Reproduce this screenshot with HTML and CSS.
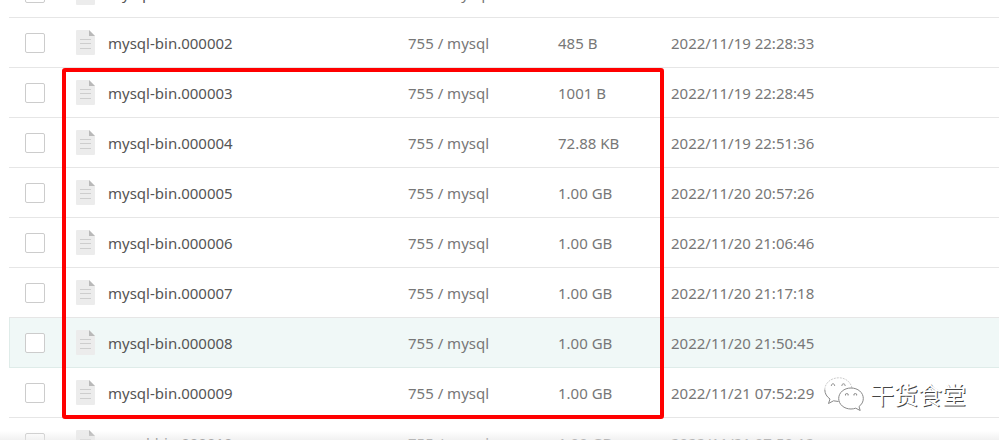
FILE: index.html
```
<!DOCTYPE html>
<html lang="zh-CN">
	<head>
		<meta charset="UTF-8">
		<meta name="viewport" content="width=device-width, initial-scale=1">
		<title>mysql-bin</title>
		<link rel="stylesheet" href="styles.css">
	</head>

	<body>
		<!-- file icon, reused by every row -->
		<svg class="sprite" aria-hidden="true">
			<symbol id="iconFile" viewBox="0 0 19 25">
				<path d="M1 0h12l6 6v18a1 1 0 0 1-1 1H1a1 1 0 0 1-1-1V1a1 1 0 0 1 1-1z" fill="#ececec"/>
				<path d="M13 0l6 6h-6z" fill="#b9b9b9"/>
				<path d="M4 9.500h11M4 13.500h11M4 18.500h11" stroke="#cdcdcd"/>
			</symbol>
		</svg>

		<div class="fileList">
			<table class="fileTable">
				<colgroup>
					<col class="colCheck">
					<col class="colIcon">
					<col class="colName">
					<col class="colOwner">
					<col class="colSize">
					<col>
				</colgroup>
				<tbody id="rows"></tbody>
			</table>
			<div class="mark"></div>
			<div class="watermark">
				<svg class="wechat" width="40" height="34" viewBox="0 0 40 34" aria-hidden="true">
					<path d="M28 11C26.500 4.500 21 .8 15 .8 7 .8.8 6.100.8 12.600" class="faint"/>
					<path d="M.8 12.600c0 4 2 7.200 5.200 9.400l-1.500 4.500 5-2.700 5 .7" class="dark"/>
					<path d="M27 11c-7 0-12.300 4.600-12.300 10.500S20 32 27 32c1.800 0 3.200-.3 4.700-.8l4.500 2.300-1.200-4c2.800-2 4.300-4.800 4.300-8C39.300 15.600 34 11 27 11z" class="dark fill"/>
					<path d="M7.500 9a1.600 1.600 0 1 1 3 0M18 9a1.600 1.600 0 1 1 3 0M21.500 18.500a1.400 1.400 0 1 1 2.600 0M30 18.500a1.400 1.400 0 1 1 2.600 0" class="dark"/>
				</svg>
				<span>干货食堂</span>
			</div>
			<div class="fade"></div>
		</div>

		<script src="script.js"></script>
	</body>
</html>
```
FILE: styles.css
```
body {
	margin: 0;
	background-color: #fff;
	color: #777;
	font-family: "Noto Sans", "Noto Sans CJK SC", sans-serif;
	font-size: 15px;
	line-height: 20px;
}

.sprite {
	display: none;
}

/*---------------------------TABLE---------------------------*/
/* the list is scrolled part way into its first row */
.fileList {
	position: relative;
	height: 100vh;
	overflow: hidden;
}

.fileTable {
	width: calc(100% - 9px);
	margin: -32px 0 0 9px;
	border-collapse: collapse;
	table-layout: fixed;
}

.colCheck {
	width: 67px;
}

.colIcon {
	width: 32px;
}

.colName {
	width: 300px;
}

.colOwner {
	width: 150px;
}

.colSize {
	width: 113px;
}

.fileTable td {
	height: 49px;
	padding: 0;
	border-bottom: 1px solid #e6e6e6;
	white-space: nowrap;
}

.fileTable label {
	color: #555;
}

.fileTable tr.active {
	background-color: #f0f8f7;
}

.fileTable tr.active td {
	border-top: 1px solid #dfece9;
	border-bottom-color: #dfece9;
}

.fileTable tr.active td:first-child {
	box-shadow: inset 1px 0 #dfece9;
}

.check {
	display: block;
	box-sizing: border-box;
	width: 20px;
	height: 20px;
	margin: 0 0 0 16px;
	appearance: none;
	background-color: #fff;
	border: 1px solid #ccc;
	border-radius: 2px;
}

.check:checked {
	background-color: #20a53a;
}

.fileIcon {
	display: block;
	width: 19px;
	height: 25px;
}

/*---------------------------OVERLAYS---------------------------*/
.mark {
	position: absolute;
	top: 68px;
	left: 62px;
	box-sizing: border-box;
	width: 602px;
	height: 351px;
	border: 4px solid #f00;
	border-radius: 3px;
}

.watermark {
	position: absolute;
	top: 376px;
	right: 33px;
	display: flex;
	align-items: center;
	gap: 6px;
	color: #fff;
	font-family: "Noto Sans CJK SC", sans-serif;
	font-size: 24px;
	line-height: 36px;
	text-shadow: 1px 1px 0 #444;
}

.wechat path {
	fill: none;
}

.wechat .faint {
	stroke: #ccc;
	stroke-dasharray: 2 1;
}

.wechat .dark {
	stroke: #888;
}

.wechat .fill {
	fill: #fff;
}

.fade {
	position: absolute;
	right: 0;
	bottom: 0;
	left: 0;
	height: 9px;
	background: linear-gradient(rgba(238, 238, 238, 0), rgba(232, 232, 232, 0.6));
}
```
FILE: script.js
```
var files = [
	{ name: 'mysql-bin.000001', size: '1.00 KB', time: '2022/11/19 22:28:31' },
	{ name: 'mysql-bin.000002', size: '485 B', time: '2022/11/19 22:28:33' },
	{ name: 'mysql-bin.000003', size: '1001 B', time: '2022/11/19 22:28:45' },
	{ name: 'mysql-bin.000004', size: '72.88 KB', time: '2022/11/19 22:51:36' },
	{ name: 'mysql-bin.000005', size: '1.00 GB', time: '2022/11/20 20:57:26' },
	{ name: 'mysql-bin.000006', size: '1.00 GB', time: '2022/11/20 21:06:46' },
	{ name: 'mysql-bin.000007', size: '1.00 GB', time: '2022/11/20 21:17:18' },
	{ name: 'mysql-bin.000008', size: '1.00 GB', time: '2022/11/20 21:50:45', active: true },
	{ name: 'mysql-bin.000009', size: '1.00 GB', time: '2022/11/21 07:52:29' },
	{ name: 'mysql-bin.000010', size: '1.00 GB', time: '2022/11/21 07:59:12' }
];

var html = '';
for (var i = 0; i < files.length; i++) {
	var file = files[i];
	html += '<tr' + (file.active ? ' class="active"' : '') + '>' +
		'<td><input type="checkbox" class="check" id="file' + i + '"></td>' +
		'<td><svg class="fileIcon" aria-hidden="true"><use href="#iconFile"/></svg></td>' +
		'<td><label for="file' + i + '">' + file.name + '</label></td>' +
		'<td>755 / mysql</td>' +
		'<td>' + file.size + '</td>' +
		'<td>' + file.time + '</td>' +
		'</tr>';
}
document.getElementById('rows').innerHTML = html;
```
